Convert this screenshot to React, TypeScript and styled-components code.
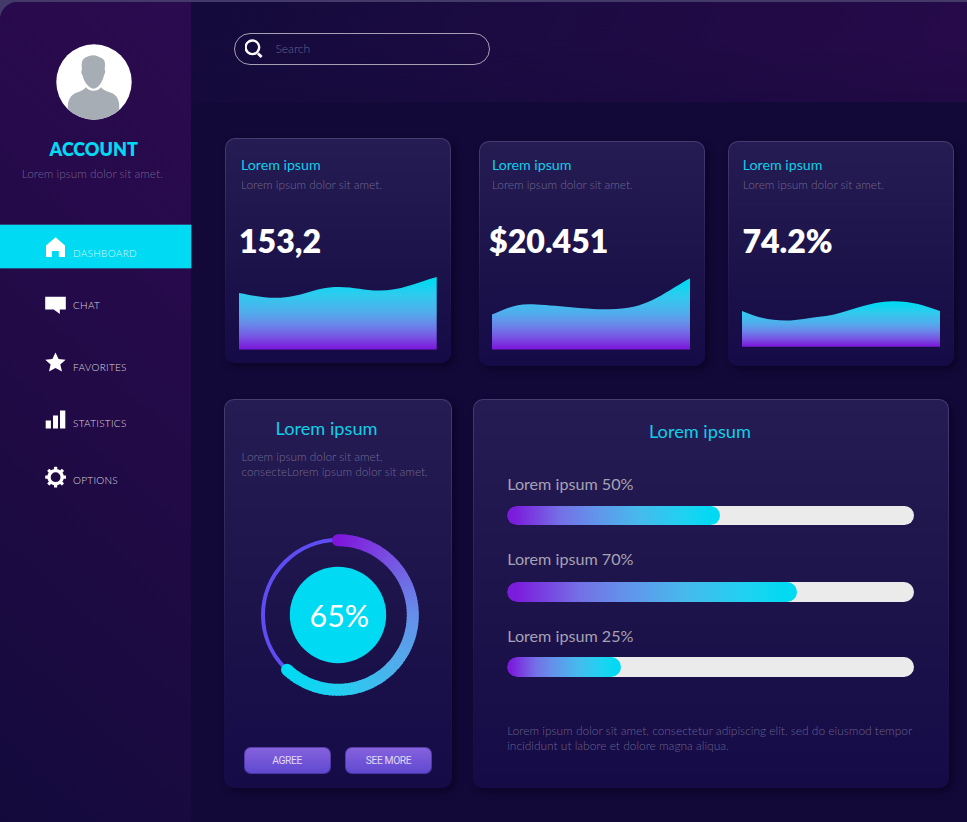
import React from 'react';
import styled, { createGlobalStyle } from 'styled-components';

const CYAN = '#00daf2';
const PURPLE = '#7b1bdc';

const GlobalStyle = createGlobalStyle`
  * { box-sizing: border-box; }
  body { margin: 0; background: #433a69; overflow: hidden; }
`;

const Page = styled.div`
  width: 967px;
  height: 822px;
  padding-top: 1.5px;
  background: #433a69;
  font-family: Lato, 'Liberation Sans', sans-serif;
  line-height: 1.2;
  overflow: hidden;
`;

const Frame = styled.div`
  display: flex;
  height: 820.5px;
  border-top-left-radius: 18px;
  overflow: hidden;
  background: #130939;
`;

const Sidebar = styled.aside`
  flex: none;
  width: 190.5px;
  background: linear-gradient(222deg, #2b0b4f 0%, #260a4b 30%, #1f0a44 60%, #190a40 80%, #130a3b 100%);
`;

const Profile = styled.div`
  display: flex;
  flex-direction: column;
  align-items: center;
  height: 223px;
  padding: 42px 3px 0 0;
`;

const AccountName = styled.h1`
  margin: 18.6px 0 0;
  font-size: 18px;
  font-weight: 800;
  line-height: 22px;
  color: ${CYAN};
`;

const Muted = styled.p<{ $size?: number; $top?: number; $left?: number }>`
  margin: ${p => p.$top ?? 0}px 0 0 ${p => p.$left ?? 0}px;
  font-size: ${p => p.$size ?? 11.85}px;
  font-weight: 300;
  line-height: 14.5px;
  white-space: nowrap;
  color: rgba(205, 195, 215, 0.47);
`;

const NavItem = styled.a<{ $active?: boolean; $gap?: number }>`
  display: flex;
  align-items: flex-start;
  gap: 6px;
  height: 43.5px;
  margin-top: ${p => p.$gap ?? 0}px;
  padding-left: 45px;
  background: ${p => (p.$active ? CYAN : 'transparent')};
  box-shadow: ${p => (p.$active ? '0 0 0 0.5px #2a8cb4' : 'none')};
`;

const NavIcon = styled.svg`
  flex: none;
  width: 22px;
  height: 22px;
  margin-top: 11px;
  fill: #fff;
`;

const NavLabel = styled.span<{ $top: number }>`
  margin-top: ${p => p.$top}px;
  font-size: 10px;
  font-weight: 300;
  line-height: 12px;
  letter-spacing: 0.3px;
  color: rgba(255, 255, 255, 0.84);
`;

const Main = styled.main`
  flex: 1;
  min-width: 0;
`;

const Header = styled.header`
  height: 100px;
  padding: 31px 0 0 43.5px;
  background: linear-gradient(180deg, rgba(19, 9, 57, 0) 40%, rgba(19, 9, 57, 0.3) 100%),
    linear-gradient(112deg, #140a3b 0%, #190b40 30%, #200a45 62%, #270a4a 100%);
`;

const SearchBox = styled.div`
  display: flex;
  align-items: center;
  width: 256px;
  height: 32px;
  padding-left: 10px;
  border: 1px solid #a6a0b4;
  border-radius: 16px;
`;

const SearchText = styled.span`
  margin: 1px 0 0 11.5px;
  font-size: 12.2px;
  font-weight: 300;
  letter-spacing: -0.1px;
  color: rgba(215, 205, 225, 0.45);
`;

const Stats = styled.section`
  display: flex;
  align-items: flex-start;
  margin: 36.5px 0 0 34.5px;
`;

const Panel = styled.article`
  flex: none;
  border: 1px solid transparent;
  border-radius: 10px;
  background: linear-gradient(180deg, #261c54 0%, #1d144b 50%, #150b47 100%) padding-box,
    linear-gradient(180deg, #463c70 0%, #30275c 35%, #1c124b 75%, #150b47 100%) border-box;
  box-shadow: 4px 4px 7px rgba(5, 0, 25, 0.55);
`;

const StatPanel = styled(Panel)<{ $raised?: boolean; $gap?: number; $inset: number }>`
  width: 226px;
  height: 225.4px;
  margin: ${p => (p.$raised ? 0 : 3)}px 0 0 ${p => p.$gap ?? 0}px;
  padding: ${p => (p.$raised ? 16.8 : 13.8)}px 0 0 ${p => p.$inset}px;
`;

const Title = styled.h2<{ $size?: number }>`
  margin: 0;
  font-size: ${p => p.$size ?? 14.2}px;
  font-weight: 400;
  line-height: ${p => (p.$size ? 22 : 17)}px;
  color: #0fcfe8;
`;

const StatTitle = styled(Title)<{ $left: number }>`
  margin-left: ${p => p.$left}px;
`;

const Value = styled.div<{ $shift?: number }>`
  margin: 28.8px 0 0 ${p => p.$shift ?? 0}px;
  font-size: 32.1px;
  font-weight: 800;
  line-height: 39px;
  color: #fff;
`;

const ChartSvg = styled.svg<{ $shift: number }>`
  display: block;
  width: 198px;
  height: 75px;
  margin: 15.7px 0 0 ${p => p.$shift}px;
`;

const Details = styled.section`
  display: flex;
  margin: 32.6px 0 0 33.5px;
`;

const GoalPanel = styled(Panel)`
  display: flex;
  flex-direction: column;
  width: 228px;
  height: 389.4px;
  padding: 17.5px 0 0 16.5px;
`;

const ProgressPanel = styled(Panel)`
  width: 476px;
  height: 389.4px;
  margin-left: 21px;
  padding: 20px 0 0 33.4px;
`;

const GoalTitle = styled(Title)`
  width: 170px;
  text-align: center;
`;

const ProgressTitle = styled(Title)`
  width: 385px;
  text-align: center;
`;

const Gauge = styled.div`
  display: grid;
  width: 170px;
  height: 170px;
  margin: 50.5px 0 0 11px;
`;

const GaugeSvg = styled.svg`
  grid-area: 1 / 1;
  width: 170px;
  height: 170px;
`;

const GaugeText = styled.div`
  grid-area: 1 / 1;
  place-self: center;
  padding: 1.4px 0 0 3.8px;
  font-size: 30.4px;
  color: #fff;
  z-index: 1;
`;

const Buttons = styled.div`
  display: flex;
  gap: 14.5px;
  margin: 47px 0 0 2px;
`;

const Button = styled.button`
  width: 87px;
  height: 27px;
  padding: 0;
  border: 1px solid rgba(60, 42, 135, 0.6);
  border-radius: 7px;
  background: linear-gradient(180deg, #8763de, #5e48cf) border-box;
  font-family: Roboto, sans-serif;
  font-size: 10.3px;
  letter-spacing: -0.4px;
  color: #e0d9f6;
`;

const ProgressRow = styled.div<{ $top: number; $gap: number }>`
  display: flex;
  flex-direction: column;
  gap: ${p => p.$gap}px;
  margin-top: ${p => p.$top}px;
`;

const ProgressLabel = styled.div`
  margin-left: -0.2px;
  font-size: 16.15px;
  line-height: 20px;
  color: #a7a2b3;
`;

const Track = styled.div<{ $width: number }>`
  width: 407px;
  height: 19.5px;
  border-radius: 10px;
  background: linear-gradient(90deg, transparent ${p => p.$width / 2}px, #ebebeb ${p => p.$width / 2}px);
  overflow: hidden;
`;

const Fill = styled.div<{ $width: number }>`
  width: ${p => p.$width}px;
  height: 100%;
  border-radius: 10px;
  background: linear-gradient(90deg, ${PURPLE} 3%, #7470e6 25%, #6491ea 40%, #46baed 62%, #1cd3f1 84%, ${CYAN} 97%);
`;

type ChartProps = { id: string; top: number; bottom: number; shift: number; line: string };

function AreaChart({ id, top, bottom, shift, line }: ChartProps) {
  return (
    <ChartSvg viewBox="0 0 198 75" $shift={shift}>
      <defs>
        <linearGradient id={id} gradientUnits="userSpaceOnUse" x1="0" x2="0" y1={top} y2={bottom}>
          <stop offset="0.05" stopColor={CYAN} />
          <stop offset="0.25" stopColor="#2fcbee" />
          <stop offset="0.5" stopColor="#52abec" />
          <stop offset="0.66" stopColor="#6a86e9" />
          <stop offset="0.82" stopColor="#7757e3" />
          <stop offset="0.98" stopColor={PURPLE} />
        </linearGradient>
      </defs>
      <path d={`${line} V${bottom} H0 Z`} fill={`url(#${id})`} />
    </ChartSvg>
  );
}

const GAUGE_STOPS: [number, number[]][] = [
  [0, [126, 22, 220]],
  [0.16, [122, 72, 225]],
  [0.4, [102, 142, 233]],
  [0.6, [78, 176, 236]],
  [0.8, [36, 206, 240]],
  [1, [0, 218, 242]],
];

function gaugeColor(t: number) {
  const i = Math.max(1, GAUGE_STOPS.findIndex(([s]) => s >= t));
  const [a, ca] = GAUGE_STOPS[i - 1];
  const [b, cb] = GAUGE_STOPS[i];
  const k = (t - a) / (b - a);
  return `rgb(${ca.map((v, n) => Math.round(v + (cb[n] - v) * k)).join(',')})`;
}

function polar(deg: number, r: number) {
  const a = (deg * Math.PI) / 180;
  return `${(85 + r * Math.sin(a)).toFixed(2)} ${(85 - r * Math.cos(a)).toFixed(2)}`;
}

function Ring() {
  const sweep = 223;
  const count = 90;
  const r = 74.8;
  const [ex, ey] = polar(sweep, r).split(' ');
  return (
    <GaugeSvg viewBox="0 0 170 170">
      <circle cx="85" cy="85" r="75" fill="none" stroke="#5d4df2" strokeWidth="4" />
      <circle cx="85" cy={85 - r} r="6" fill={gaugeColor(0)} />
      <circle cx={ex} cy={ey} r="6" fill={gaugeColor(1)} />
      {Array.from({ length: count }, (_, i) => {
        const from = (sweep * i) / count;
        const to = Math.min(sweep, (sweep * (i + 1)) / count + 0.6);
        return (
          <path
            key={i}
            d={`M${polar(from, r)} A${r} ${r} 0 0 1 ${polar(to, r)}`}
            fill="none"
            stroke={gaugeColor((i + 0.5) / count)}
            strokeWidth="12"
          />
        );
      })}
      <circle cx="85" cy="85" r="48.2" fill={CYAN} />
    </GaugeSvg>
  );
}

function Avatar() {
  return (
    <svg width="76" height="76" viewBox="0 0 76 76">
      <defs>
        <clipPath id="avatar">
          <circle cx="38" cy="38" r="37.7" />
        </clipPath>
      </defs>
      <circle cx="38" cy="38" r="37.7" fill="#fff" />
      <g clipPath="url(#avatar)" fill="#a7adb4">
        <path d="M36 11.4 C39.5 11 42 12.7 45 13.8 C48.5 15.3 49.4 18.5 49 22 L48.6 25.7 C49.8 26.3 49.1 29.6 48 31.2 C47 36 44.6 40.2 41.6 43 Q37.6 46.4 33.4 43 C29.8 40 27.4 35.5 26.5 31.2 C25.1 29.8 24.9 26.6 26 25.8 C25.3 21 25.5 16.2 28.3 14.2 C30.7 12.8 32.6 11.6 36 11.4 Z" />
        <path d="M29.9 43.2 C32.3 46 34.4 46.7 37.4 46.7 C40.6 46.7 43 45.7 45.2 43.2 C46.3 45.6 50.5 47.1 54.3 48.5 C60.5 50.5 62.8 55 63.2 61 V76 H11.8 V62 C12.2 55.5 14.5 51.2 20.2 48.7 C24.2 47.2 28.1 45.9 29.9 43.2 Z" />
      </g>
    </svg>
  );
}

const TEETH = [0, 45, 90, 135, 180, 225, 270, 315];

const icons = {
  home: <path d="M10.6 1.2 L20 9.6 V21 H13.8 V15.1 H7 V21 H1 V9.6 Z" />,
  chat: <path d="M0.2 0.8 H20.8 V13.4 H14.8 V18 L8.8 13.4 H0.2 Z" />,
  star: <path d="M10.5 0.5 L13.6 7 L20.6 7.7 L15.3 12.4 L17 19.5 L10.5 15.9 L4 19.5 L5.6 12.4 L0.3 7.7 L7.4 7 Z" />,
  stats: <path d="M0.7 10.4 H5.9 V18.4 H0.7 Z M8 5.4 H13 V18.4 H8 Z M15 0.6 H20.3 V18.4 H15 Z" />,
  gear: (
    <>
      <circle cx="10.6" cy="11.2" r="6.6" fill="none" stroke="#fff" strokeWidth="3.4" />
      {TEETH.map(a => (
        <rect key={a} x="9" y="0.8" width="3.2" height="3.6" rx="0.5" transform={`rotate(${a} 10.6 11.2)`} />
      ))}
    </>
  ),
};

const nav: { label: string; icon: keyof typeof icons; gap: number; top: number }[] = [
  { label: 'DASHBOARD', icon: 'home', gap: 0, top: 22.6 },
  { label: 'CHAT', icon: 'chat', gap: 17.3, top: 14 },
  { label: 'FAVORITES', icon: 'star', gap: 12.5, top: 19.4 },
  { label: 'STATISTICS', icon: 'stats', gap: 14, top: 17.8 },
  { label: 'OPTIONS', icon: 'gear', gap: 12.3, top: 19.2 },
];

const stats = [
  {
    value: '153,2', inset: 13, text: 2, shift: -2, gap: 0, raised: true,
    chart: { id: 'visits', top: 1, bottom: 73.5, shift: 0, line: 'M0 17 C14 19.5 23 21.8 37 21.8 C64 21.8 73 11 100 11 C116 11 125 14.6 140 14.6 C162 14.6 176 7 197.7 1' },
  },
  {
    value: '$20.451', inset: 11.5, text: 0.4, shift: -2.8, gap: 28, raised: false,
    chart: { id: 'revenue', top: 2.3, bottom: 73.5, shift: 0.8, line: 'M0 38.5 C14 33 22 28.2 37 28.2 C55 28.2 90 33.3 117 33.3 C155 33.3 168 19 198 2.3' },
  },
  {
    value: '74.2%', inset: 13, text: 0.8, shift: -0.4, gap: 23, raised: false,
    chart: { id: 'rate', top: 25, bottom: 70.7, shift: -0.5, line: 'M0 35 C15 41.3 27 44.5 44 44.5 C57 44.5 65 42 84 40 C106 36.5 127 25.2 151 25.2 C171 25.2 182 29.5 198 35' },
  },
];

const progress = [
  { label: 'Lorem ipsum 50%', width: 213, top: 32, gap: 12 },
  { label: 'Lorem ipsum 70%', width: 290, top: 24, gap: 12.7 },
  { label: 'Lorem ipsum 25%', width: 114, top: 24.2, gap: 11.5 },
];

export default function App() {
  return (
    <Page>
      <GlobalStyle />
      <Frame>
        <Sidebar>
          <Profile>
            <Avatar />
            <AccountName>ACCOUNT</AccountName>
            <Muted $top={7.2} $left={-3}>Lorem ipsum dolor sit amet.</Muted>
          </Profile>
          <nav>
            {nav.map(item => (
              <NavItem key={item.label} $active={item.icon === 'home'} $gap={item.gap}>
                <NavIcon viewBox="0 0 22 22">{icons[item.icon]}</NavIcon>
                <NavLabel $top={item.top}>{item.label}</NavLabel>
              </NavItem>
            ))}
          </nav>
        </Sidebar>
        <Main>
          <Header>
            <SearchBox>
              <svg width="19" height="20" viewBox="0 0 19 20" fill="none" stroke="#fff">
                <circle cx="7.4" cy="8.3" r="6.8" strokeWidth="2.4" />
                <path d="M13 14.4 L16.6 18" strokeWidth="2.8" />
              </svg>
              <SearchText>Search</SearchText>
            </SearchBox>
          </Header>
          <Stats>
            {stats.map(s => (
              <StatPanel key={s.value} $raised={s.raised} $gap={s.gap} $inset={s.inset}>
                <StatTitle $left={s.text}>Lorem ipsum</StatTitle>
                <Muted $top={5} $left={s.text}>Lorem ipsum dolor sit amet.</Muted>
                <Value $shift={s.text + s.shift}>{s.value}</Value>
                <AreaChart {...s.chart} />
              </StatPanel>
            ))}
          </Stats>
          <Details>
            <GoalPanel>
              <GoalTitle $size={18.2}>Lorem ipsum</GoalTitle>
              <Muted $top={11} $size={11.85}>
                Lorem ipsum dolor sit amet,
                <br />
                consecteLorem ipsum dolor sit amet,
              </Muted>
              <Gauge>
                <Ring />
                <GaugeText>65%</GaugeText>
              </Gauge>
              <Buttons>
                <Button>AGREE</Button>
                <Button>SEE MORE</Button>
              </Buttons>
            </GoalPanel>
            <ProgressPanel>
              <ProgressTitle $size={18.2}>Lorem ipsum</ProgressTitle>
              {progress.map(p => (
                <ProgressRow key={p.label} $top={p.top} $gap={p.gap}>
                  <ProgressLabel>{p.label}</ProgressLabel>
                  <Track $width={p.width}>
                    <Fill $width={p.width} />
                  </Track>
                </ProgressRow>
              ))}
              <Muted $top={47.6} $size={11.93} $left={-0.2}>
                Lorem ipsum dolor sit amet, consectetur adipiscing elit, sed do eiusmod tempor
                <br />
                incididunt ut labore et dolore magna aliqua.
              </Muted>
            </ProgressPanel>
          </Details>
        </Main>
      </Frame>
    </Page>
  );
}
